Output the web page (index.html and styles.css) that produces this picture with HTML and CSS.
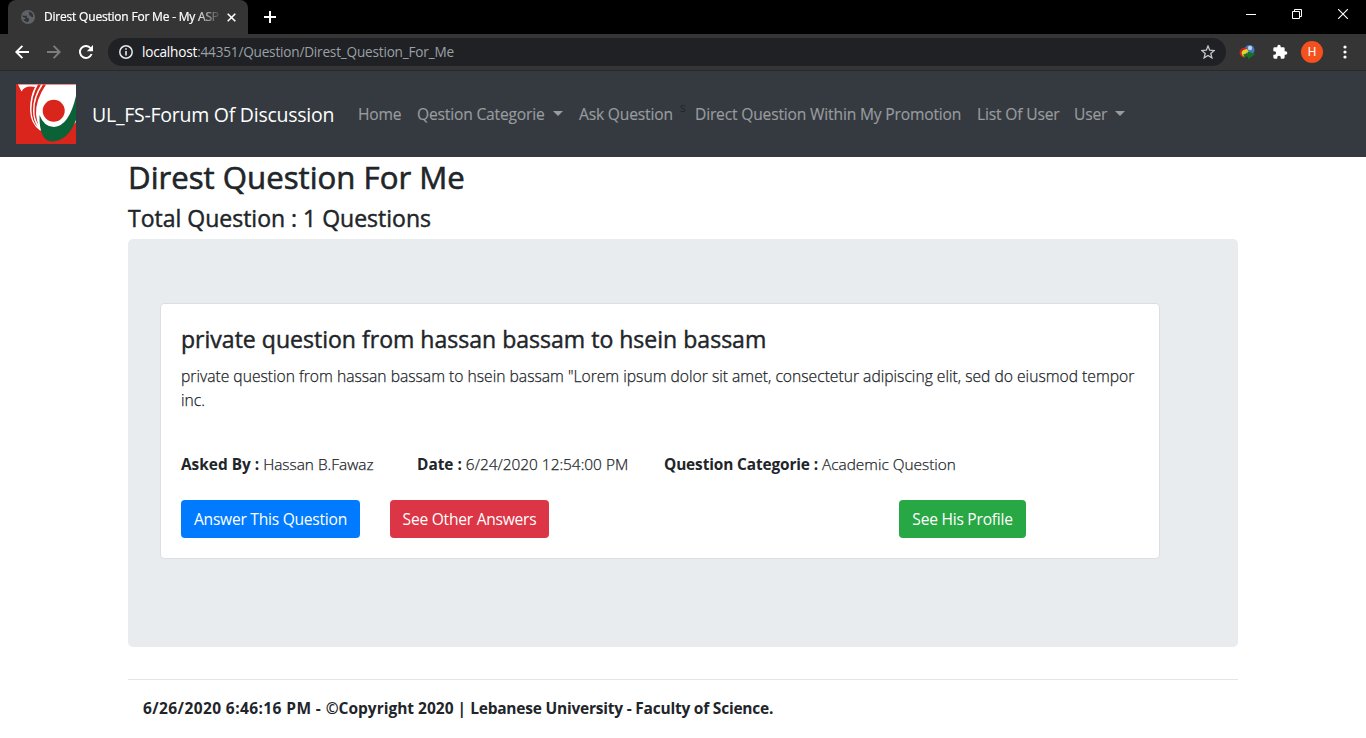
FILE: index.html
```html
<!DOCTYPE html>
<html lang="en">
<head>
<meta charset="utf-8">
<title>Direst Question For Me - My ASP.NET Application</title>
<link rel="stylesheet" href="styles.css">
</head>
<body>
<div class="tabstrip">
  <div class="tab">
    <svg class="globe" width="14" height="14" viewBox="0 0 14 14"><circle cx="7" cy="7" r="7" fill="#5f6368"/><path d="M1.6 5.2Q4 6.2 6.2 5.4L5.6 7.6 7.4 8.3 8.2 9.7 6.7 12.2Q3.6 11.8 2.2 9.2L4.4 9.3 4.6 7.9 1.5 6.8ZM7.4 1.7Q10 1.5 11.7 4L12.3 6.7 10.7 7.3 9.7 5.7 8 5 8.4 3.6Z" fill="#303234"/></svg>
    <span class="tab-title">Direst Question For Me - My ASP</span>
    <svg class="tab-close" width="9" height="9" viewBox="0 0 9 9"><path d="M.7.7l7.6 7.6M8.3.7L.7 8.3" stroke="#fff" stroke-width="1.6"/></svg>
  </div>
  <svg class="new-tab" width="12" height="12" viewBox="0 0 12 12"><path d="M6 0v12M0 6h12" stroke="#fff" stroke-width="2"/></svg>
  <div class="window-controls">
    <svg width="10" height="10" viewBox="0 0 10 10"><path d="M0 5.5h10" stroke="#fff"/></svg>
    <svg width="10" height="10" viewBox="0 0 10 10"><path d="M.5 2.5h7v7h-7zM2.5 2.5v-2h7v7h-2" fill="none" stroke="#fff"/></svg>
    <svg width="10" height="10" viewBox="0 0 10 10"><path d="M0 0l10 10M10 0L0 10" stroke="#fff" stroke-width="1.1"/></svg>
  </div>
</div>
<div class="toolbar">
  <svg class="tool back" width="14" height="14" viewBox="0 0 14 14"><path d="M14 7H1.6M7.4.9L1.3 7l6.1 6.1" fill="none" stroke="#fff" stroke-width="1.9"/></svg>
  <svg class="tool forward" width="14" height="14" viewBox="0 0 14 14"><path d="M0 7h12.4M6.6.9L12.7 7l-6.1 6.1" fill="none" stroke="#7d7d7e" stroke-width="1.9"/></svg>
  <svg class="tool reload" width="14" height="14" viewBox="0 0 14 14"><path d="M12.6 9A6 6 0 1 1 11.5 3" fill="none" stroke="#fff" stroke-width="1.9"/><path d="M14 0v6.2H7.8z" fill="#fff"/></svg>
  <div class="address">
    <svg width="14" height="14" viewBox="0 0 14 14"><circle cx="7" cy="7" r="6.2" fill="none" stroke="#e8eaed" stroke-width="1.5"/><path d="M7 6v4.6M7 3.2v1.6" stroke="#e8eaed" stroke-width="1.6"/></svg>
    <span class="url"><b class="host">localhost</b>:44351/Question/Direst_Question_For_Me</span>
    <svg class="star" width="14" height="14" viewBox="0 0 14 14"><path d="M7 1l1.7 4.2 4.6.3-3.5 2.9 1.1 4.5L7 10.4l-3.9 2.5 1.1-4.5L.7 5.5l4.6-.3z" fill="none" stroke="#c4c7ca" stroke-width="1.3"/></svg>
  </div>
  <svg class="idm" width="17" height="16" viewBox="0 0 17 16"><circle cx="10.500" cy="6" r="5" fill="#4877bd"/><circle cx="11" cy="4" r="2.200" fill="#b7d4ef"/><path d="M7 3.500Q1 3.500 .5 8.500q0 4 5 5.500Q3 11 4 9.500 6 6.500 9 7Z" fill="#b92c20"/><path d="M8 5Q3 5.500 2.500 9q.5 3 3.500 4.500Q5.500 10.500 7 9l3-1Z" fill="#edcf2c"/><path d="M4.500 10l4 .3L9 7.500l7.500 2.500-7.500 5v-2.500L5 13Z" fill="#127524"/></svg>
  <svg class="puzzle" width="16" height="16" viewBox="0 0 24 24"><path d="M20.500 11H19V7a2 2 0 0 0-2-2h-4V3.500a2.500 2.500 0 0 0-5 0V5H4a2 2 0 0 0-2 2v3.800h1.500a2.700 2.700 0 0 1 0 5.400H2V20a2 2 0 0 0 2 2h3.800v-1.500a2.700 2.700 0 0 1 5.400 0V22H17a2 2 0 0 0 2-2v-4h1.500a2.500 2.500 0 0 0 0-5z" fill="#fff"/></svg>
  <span class="avatar">H</span>
  <svg class="more" width="4" height="14" viewBox="0 0 4 14"><g fill="#fff"><circle cx="2" cy="2" r="1.6"/><circle cx="2" cy="7" r="1.6"/><circle cx="2" cy="12" r="1.6"/></g></svg>
</div>
<nav class="navbar">
  <svg class="logo" width="60" height="60" viewBox="0 0 60 60">
    <rect width="60" height="60" fill="#da251c"/>
    <path d="M2 0.500H60V38L52 46 24 46.500Q14.500 40 14 26 14 12 19 3Q9 1 5.500 7.500Z" fill="#fff"/>
    <path d="M22 0.500H25Q16.500 14 17 27 17 36 22 43.500 15.500 37 15.500 26 15.500 12 22 .5Z" fill="#da251c"/>
    <path d="M27 0.500H30Q19.500 16 20 30 20.500 36 22.500 41 18 34 18.500 26 18.500 13 27 .5Z" fill="#da251c"/>
    <path d="M60 12V36Q52 57 36 57.500 23 57 23.500 31 28 43 38 43 53 42 60 12Z" fill="#0c6237"/>
    <path d="M60 42V48L51 52Z" fill="#da251c"/>
    <circle cx="37.700" cy="26.700" r="11" fill="#da251c"/>
  </svg>
  <a class="brand">UL_FS-Forum Of Discussion</a>
  <a class="nav-link home">Home</a>
  <a class="nav-link categorie">Qestion Categorie<i class="caret"></i></a>
  <a class="nav-link ask">Ask Question</a>
  <sup class="stray">s</sup>
  <a class="nav-link direct">Direct Question Within My Promotion</a>
  <a class="nav-link list">List Of User</a>
  <a class="nav-link user">User<i class="caret"></i></a>
</nav>
<main class="container">
  <h2 class="page-title">Direst Question For Me</h2>
  <h4 class="total">Total Question : 1 Questions</h4>
  <section class="jumbotron">
    <article class="card">
      <h4 class="card-title">private question from hassan bassam to hsein bassam</h4>
      <p class="card-text">private question from hassan bassam to hsein bassam "Lorem ipsum dolor sit amet, consectetur adipiscing elit, sed do eiusmod tempor<br>inc.</p>
      <div class="meta">
        <span class="asked"><b>Asked By :</b> Hassan B.Fawaz</span>
        <span class="date"><b>Date :</b> 6/24/2020 12:54:00 PM</span>
        <span class="kind"><b>Question Categorie :</b> Academic Question</span>
      </div>
      <div class="actions">
        <a class="btn answer">Answer This Question</a>
        <a class="btn others">See Other Answers</a>
        <a class="btn profile">See His Profile</a>
      </div>
    </article>
  </section>
  <footer class="footer"><b><span class="stamp">6/26/2020 6:46:16 PM - </span>©Copyright 2020 | <span class="org">Lebanese University - Faculty of Science.</span></b></footer>
</main>
</body>
</html>
```
FILE: styles.css
```css
* { box-sizing: border-box; }
body { margin: 0; height: 738px; overflow: hidden; background: #fff; color: #212529; font: 16px/24px "Open Sans", "Noto Sans", sans-serif; white-space: nowrap; }
svg { display: block; flex: none; }
h2, h4, p { margin: 0; }

.tabstrip { display: flex; height: 34px; background: #000; }
.tab { display: flex; align-items: center; width: 240px; margin-left: 8px; padding-left: 13px; background: #353535; border-radius: 8px 8px 0 0; color: #fff; }
.tab-title { width: 177px; margin-left: 9px; overflow: hidden; font-size: 12px; letter-spacing: -.2px; -webkit-text-stroke: .2px; -webkit-mask-image: linear-gradient(90deg, #000 152px, transparent 178px); }
.tab-close { margin-left: 6px; }
.new-tab { margin: 11px 0 0 16px; }
.window-controls { display: flex; gap: 36px; margin: 9px 18px 0 auto; }

.toolbar { display: flex; align-items: center; height: 37px; padding-left: 15px; background: #353535; border-bottom: 1px solid #27282a; }
.forward { margin-left: 18px; }
.reload { margin-left: 18px; }
.address { display: flex; align-items: center; width: 1118px; height: 28px; margin-left: 15px; padding-left: 11px; border-radius: 14px; background: #202124; }
.url { margin-left: 9px; color: #9aa0a6; font-size: 13.6px; letter-spacing: -.2px; }
.host { color: #fff; font-weight: 400; }
.star { margin: 0 11px 0 auto; }
.idm { margin-left: 13px; }
.puzzle { margin-left: 16px; }
.avatar { width: 22px; height: 22px; margin-left: 13px; border-radius: 50%; background: #f4511e; color: #fff; font: 12px/22px Roboto, sans-serif; text-align: center; }
.more { margin-left: 20px; }

.navbar { display: flex; align-items: center; height: 86px; padding-left: 16px; background: #343a40; color: #999c9f; }
.brand { width: 242px; margin: 1px 24px 0 16px; color: #fff; font-size: 19.5px; letter-spacing: -.25px; }
.nav-link { display: flex; align-items: center; font-size: 15.6px; letter-spacing: -.17px; -webkit-text-stroke: .15px; }
.caret { margin: 0 0 1px auto; border: 5px solid transparent; border-top-color: currentColor; border-bottom: 0; }
.home { width: 43px; margin-right: 16px; }
.categorie { width: 146px; margin-right: 16px; }
.ask { width: 94px; margin-right: 7px; }
.stray { width: 7px; margin: -12px 8px 0 0; color: #212529; font-size: 12px; line-height: 16px; }
.direct { width: 267px; margin-right: 15px; }
.list { width: 82px; margin-right: 15px; }
.user { width: 51px; }

.container { width: 1110px; margin: 0 auto; }
.page-title { height: 46px; font-size: 31.2px; font-weight: 500; line-height: 40px; -webkit-text-stroke: .6px; }
.total { height: 36px; padding-top: 1px; font-size: 23px; font-weight: 500; line-height: 29px; -webkit-text-stroke: .45px; }
.jumbotron { height: 408px; padding: 64px 32px; border-radius: 5px; background: #e9ecef; }
.card { width: 1000px; height: 256px; padding: 20px; border: 1px solid #dcdfe2; border-radius: 4px; background: #fff; }
.card-title { height: 40px; padding-top: 1px; font-size: 23.05px; font-weight: 500; line-height: 29px; -webkit-text-stroke: .45px; }
.card-text { height: 89px; font-size: 15.67px; font-weight: 300; -webkit-text-stroke: .25px; }
.meta { display: flex; font-size: 15.4px; font-weight: 300; -webkit-text-stroke: .25px; }
.meta b, .footer b { font-weight: 700; -webkit-text-stroke: 0; }
.asked { width: 236px; }
.date { width: 247px; }
.kind b { letter-spacing: -.12px; }
.actions { display: flex; margin-top: 23px; }
.btn { height: 38px; border-radius: 4px; color: #fff; font-size: 15.6px; line-height: 39px; text-align: center; letter-spacing: -.25px; }
.answer { width: 179px; background: #007bff; }
.others { width: 159px; margin-left: 30px; background: #dc3545; }
.profile { width: 127px; margin-left: 350px; background: #28a745; }
.footer { margin-top: 32px; padding: 16px 15px; border-top: 1px solid #e5e5e5; font-size: 15.5px; }
.stamp { letter-spacing: .4px; }
.org { letter-spacing: -.22px; }
```
